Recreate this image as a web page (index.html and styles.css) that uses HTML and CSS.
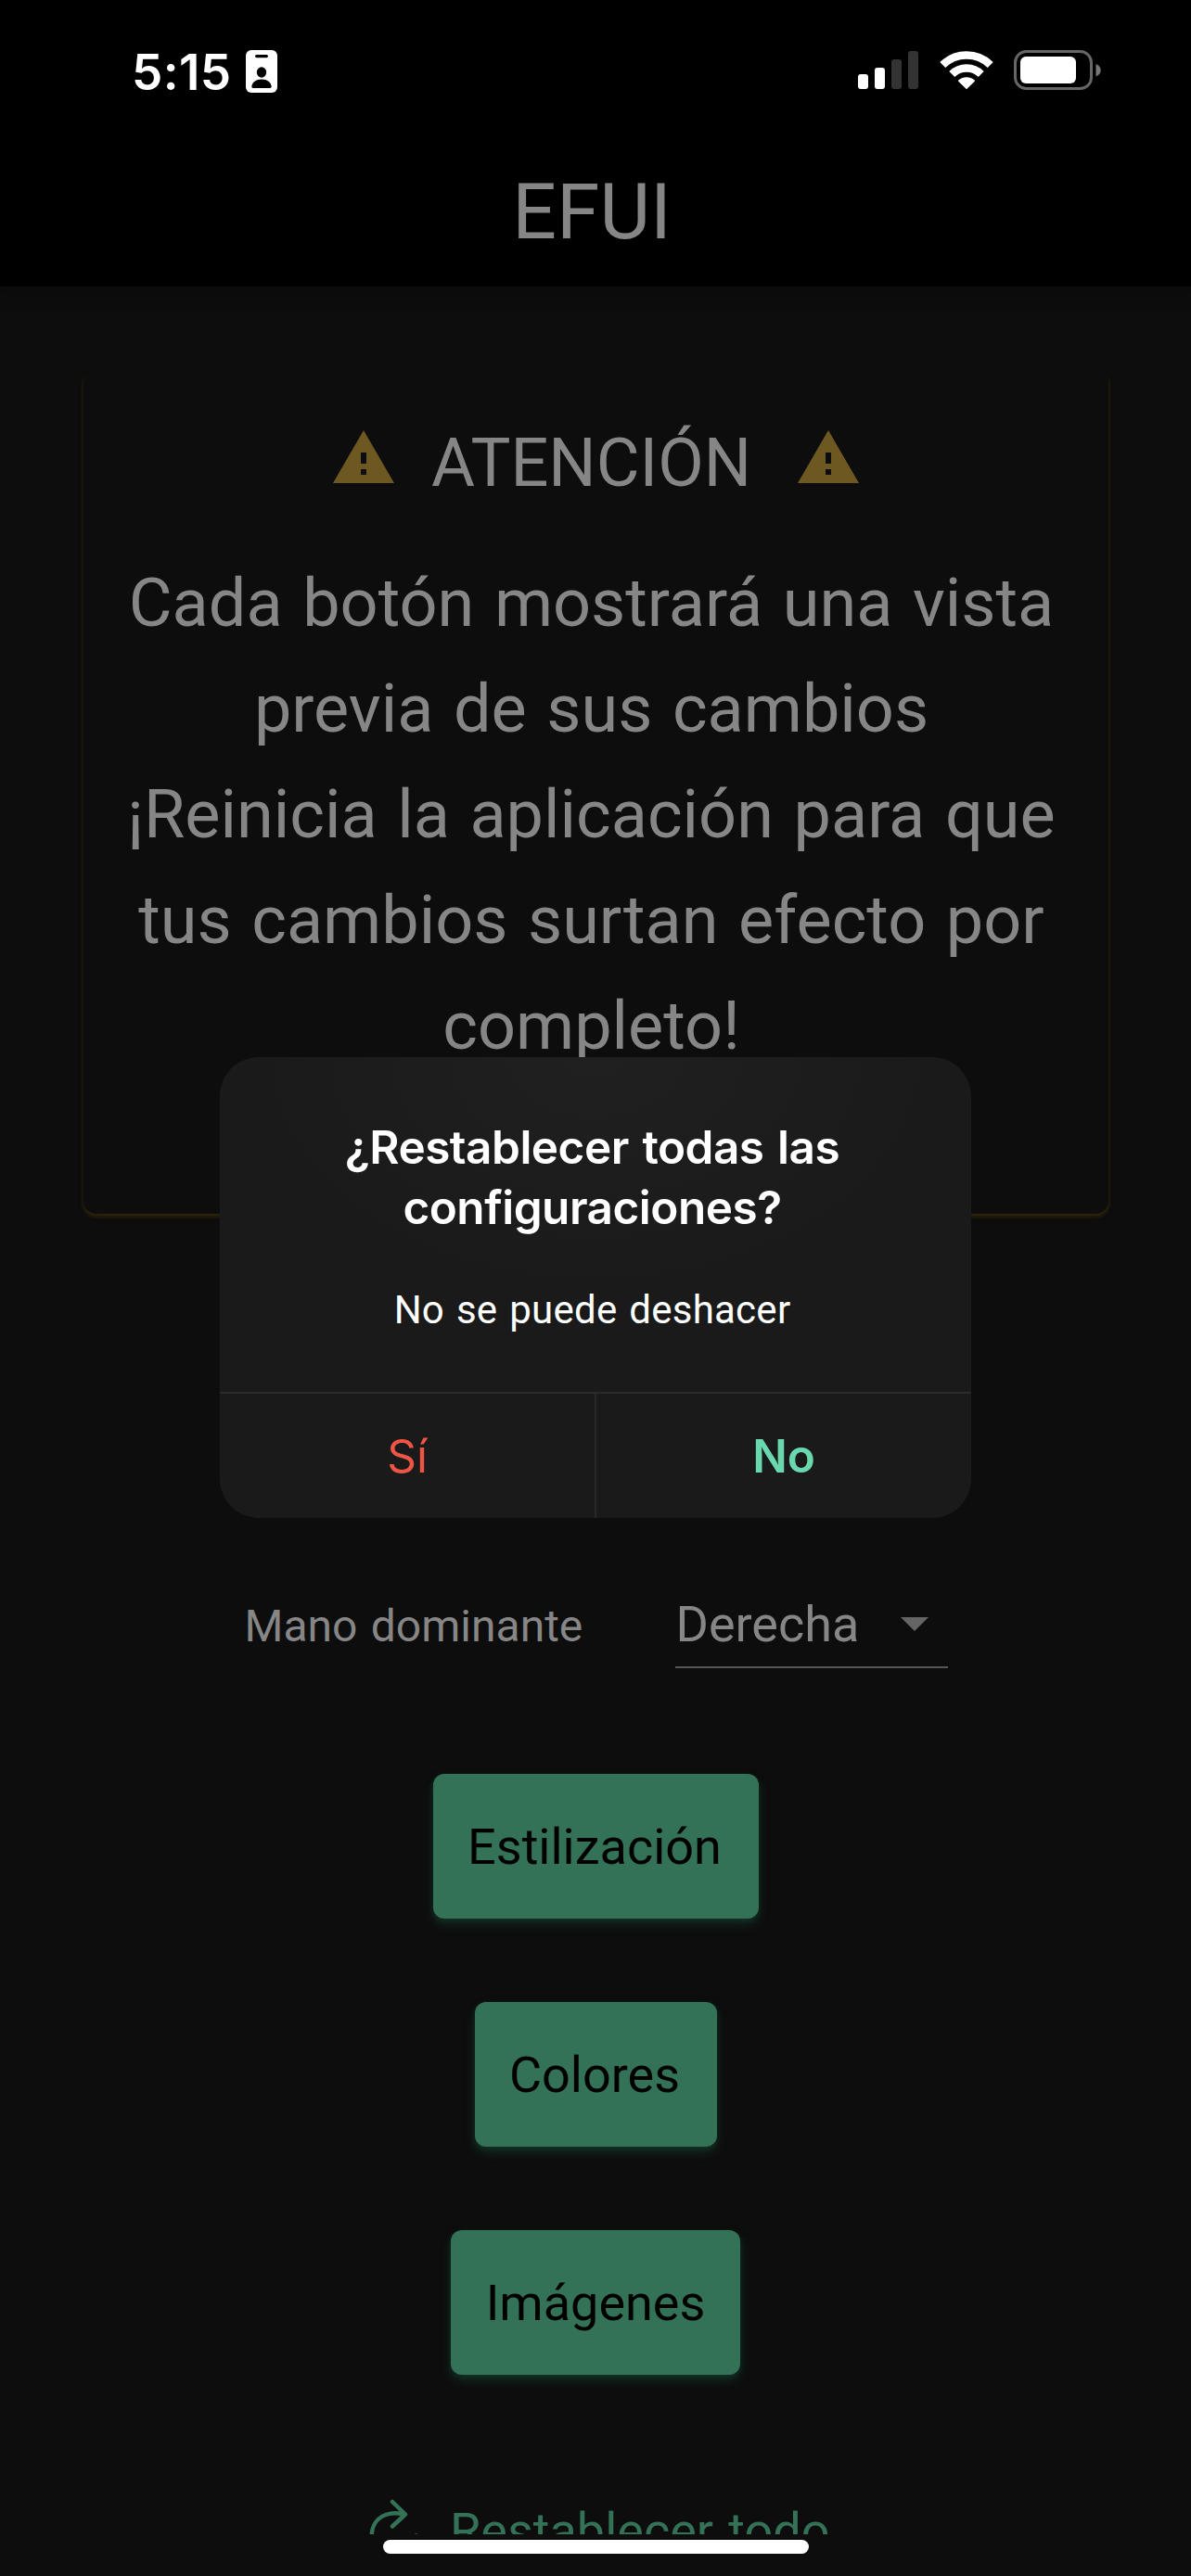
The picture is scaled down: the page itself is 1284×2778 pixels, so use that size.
FILE: index.html
```
<!DOCTYPE html>
<html lang="es">
<head>
<meta charset="utf-8">
<title>EFUI</title>
<link rel="stylesheet" href="styles.css">
</head>
<body>
<div class="screen">
  <header class="app-bar">
    <div class="status">
      <div class="status-left">
        <span class="time">5:15</span>
        <svg class="badge" viewBox="0 0 34 46" width="34" height="46">
          <rect width="34" height="46" rx="6" fill="#fff"/>
          <rect x="10" y="5" width="14" height="3.2" rx="1.6"/>
          <ellipse cx="17" cy="24" rx="5.2" ry="5.8"/>
          <path d="M6.3 39.3C6.8 34.500 11 31.400 17 31.400s10.200 3.100 10.700 7.900c0 1-.6 1.600-1.600 1.600H7.900c-1 0-1.600-.6-1.600-1.600z"/>
        </svg>
      </div>
      <div class="status-right">
        <svg width="66" height="43" viewBox="0 0 66 43">
          <g fill="#fff"><rect y="26" width="11" height="16" rx="3"/><rect x="18" y="19" width="11" height="23" rx="3"/></g>
          <g fill="#333"><rect x="36" y="10" width="11" height="32" rx="3"/><rect x="54" y="1" width="11" height="41" rx="3"/></g>
        </svg>
        <svg width="58" height="43" viewBox="0 0 58 43">
          <g fill="none" stroke="#fff" stroke-width="8.500">
            <path d="M3.300 16A36.800 36.800 0 0 1 54.700 16"/>
            <path d="M13.300 26A22.300 22.300 0 0 1 44.700 26"/>
          </g>
          <path fill="#fff" d="M29 42.300 20.500 34c-.6-.6-.5-1.300 0-1.700a13 13 0 0 1 17 0c.5.400.6 1.100 0 1.700z"/>
        </svg>
        <svg width="95" height="43" viewBox="0 0 95 43">
          <rect x="1.500" y="1.500" width="82" height="40" rx="12" fill="none" stroke="#666" stroke-width="3"/>
          <rect x="7" y="7" width="60" height="29" rx="6" fill="#fff"/>
          <path fill="#777" d="M88.500 15c3.300 1.200 5.200 3.700 5.200 6.700s-1.900 5.500-5.200 6.700z"/>
        </svg>
      </div>
    </div>
    <h1 class="title">EFUI</h1>
  </header>

  <main class="content">
    <section class="card">
      <div class="card-head">
        <svg class="warn" viewBox="0 0 24 24"><path d="M1 21h22L12 2 1 21zm12-3h-2v-2h2v2zm0-4h-2v-4h2v4z"/></svg>
        <h2 class="card-title">ATENCIÓN</h2>
        <svg class="warn" viewBox="0 0 24 24"><path d="M1 21h22L12 2 1 21zm12-3h-2v-2h2v2zm0-4h-2v-4h2v4z"/></svg>
      </div>
      <p class="card-text">Cada botón mostrará una vista<br>previa de sus cambios<br>¡Reinicia la aplicación para que<br>tus cambios surtan efecto por<br>completo!</p>
    </section>

    <div class="hand">
      <span class="hand-label">Mano dominante</span>
      <div class="select">
        <span>Derecha</span>
        <svg width="30" height="15" viewBox="0 0 30 15"><path fill="#656565" d="M0 0h30L15 15z"/></svg>
      </div>
    </div>

    <div class="buttons">
      <button class="btn btn-style">Estilización</button>
      <button class="btn btn-colors">Colores</button>
      <button class="btn btn-images">Imágenes</button>
    </div>

    <div class="reset">
      <svg width="60" height="60" viewBox="0 0 60 60" fill="none" stroke="#347258" stroke-width="4.500" stroke-linecap="round" stroke-linejoin="round">
        <path d="M27 8 41 21.500 27 34.500M40 21.500C35 20.500 29 19.700 24 20.900 12 23.500 4.800 32 4.700 45"/>
        <path d="M52.700 44.500V54"/>
      </svg>
      <span>Restablecer todo</span>
    </div>
  </main>

  <div class="dialog">
    <div class="dialog-body">
      <h3 class="dialog-title">¿Restablecer todas las<br>configuraciones?</h3>
      <p class="dialog-text">No se puede deshacer</p>
    </div>
    <div class="dialog-actions">
      <button class="action yes">Sí</button>
      <button class="action no">No</button>
    </div>
  </div>
  <div class="home-indicator"></div>
</div>
</body>
</html>
```
FILE: styles.css
```
* { box-sizing: border-box; word-spacing: 0.052em; }
body { margin: 0; background: #0d0d0d; }
h1, h2, h3, p { margin: 0; font-weight: 400; }
button { border: 0; padding: 0; background: none; font: inherit; color: inherit; }
svg { display: block; flex: none; }

.screen {
  position: relative;
  width: 1284px;
  height: 2778px;
  overflow: hidden;
  background: #0d0d0d;
  color: #868686;
  font-family: Roboto, sans-serif;
  white-space: nowrap;
}

.app-bar {
  position: relative;
  z-index: 1;
  height: 309px;
  background: #000;
  box-shadow: 0 4px 18px rgba(0, 0, 0, 0.35);
}
.status {
  display: flex;
  justify-content: space-between;
  align-items: center;
  height: 148px;
  padding: 7px 96px 0 142px;
}
.status-left { display: flex; align-items: center; gap: 15px; }
.badge { margin-top: -1px; }
.time {
  font: 600 53px/60px Inter, sans-serif;
  letter-spacing: 0.4px;
  color: #fff;
}
.status-right { display: flex; align-items: center; gap: 22px; padding-bottom: 5px; }
.title {
  padding-right: 8px;
  font-size: 84px;
  line-height: 161px;
  text-align: center;
}

.content { height: 2424px; overflow: hidden; }
.card {
  width: 1105px;
  height: 910px;
  margin: 90px 0 0 89.5px;
  padding-top: 59px;
  border-radius: 14px;
  background: #0d0d0d;
  box-shadow: 0 3px 5px rgba(130, 95, 10, 0.24), 0 2px 4px 1px rgba(130, 95, 10, 0.1);
}
.card-head { display: flex; height: 82px; padding-left: 266.5px; }
.warn { width: 72px; height: 72px; fill: #6e5822; }
.card-title {
  margin: 0 47px 0 37px;
  font-size: 72px;
  line-height: 84px;
}
.card-text {
  margin-top: 54px;
  padding-right: 9px;
  font-size: 72px;
  line-height: 114px;
  text-align: center;
}

.hand {
  display: flex;
  align-items: baseline;
  justify-content: space-between;
  margin: 413px 262.5px 0 263.5px;
  line-height: 60px;
}
.hand-label { font-size: 48px; }
.select {
  display: flex;
  align-items: center;
  justify-content: space-between;
  width: 294px;
  height: 77px;
  padding: 0 21px 16px 1px;
  border-bottom: 2px solid #555;
  font-size: 54px;
}

.buttons {
  display: flex;
  flex-direction: column;
  align-items: center;
  gap: 90px;
  margin-top: 113.5px;
}
.btn {
  height: 156px;
  padding: 2px 2px 0 0;
  border-radius: 12px;
  background: #347258;
  box-shadow: 0 6px 12px rgba(30, 100, 72, 0.35), 0 2px 6px rgba(30, 100, 72, 0.2);
  color: #000;
  font-size: 54px;
  text-align: center;
}
.btn-style { width: 351px; }
.btn-colors { width: 261px; }
.btn-images { width: 312px; padding-right: 0; }

.reset {
  display: flex;
  gap: 29px;
  margin: 129.5px 0 0 396px;
  color: #347258;
  font-size: 54px;
  line-height: 60px;
}
.reset span { padding-top: 10px; }

.dialog {
  position: absolute;
  z-index: 2;
  left: 237px;
  top: 1140px;
  display: flex;
  flex-direction: column;
  width: 810px;
  height: 497px;
  border-radius: 42px;
  overflow: hidden;
  background: radial-gradient(ellipse 380px 260px at 50% 0, #202020, #1a1a1a);
  color: #fff;
  text-align: center;
}
.dialog-body { height: 361px; padding: 65px 7px 0 0; }
.dialog-title {
  font: 600 49.5px/65px Inter, sans-serif;
  letter-spacing: -0.5px;
}
.dialog-text {
  margin-top: 48px;
  font-size: 42px;
  line-height: 60px;
  letter-spacing: 0.25px;
}
.dialog-actions {
  display: flex;
  flex: 1;
  border-top: 2px solid #2b2b2b;
}
.action {
  flex: 1;
  font-family: Inter, sans-serif;
  font-size: 49.5px;
}
.yes { color: #ef5545; border-right: 2px solid #282828; }
.no { color: #69d8ae; font-weight: 600; }

.home-indicator {
  position: absolute;
  left: 413px;
  top: 2739px;
  width: 459px;
  height: 15px;
  border-radius: 8px;
  background: #fff;
}
```
